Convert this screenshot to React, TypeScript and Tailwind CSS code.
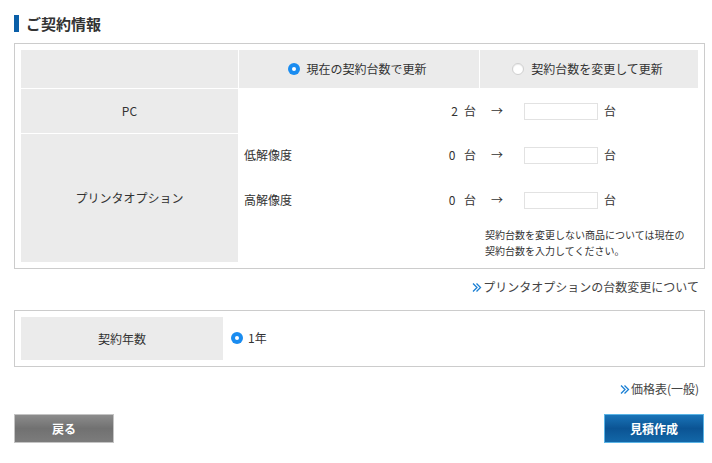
import React from "react"

const font = { fontFamily: '"Noto Sans CJK JP", "Noto Sans", sans-serif' }

function Radio({ checked }: { checked?: boolean }) {
  if (checked) {
    return (
      <span className="flex h-3 w-3 shrink-0 items-center justify-center rounded-full bg-[#1a8cf0]">
        <span className="h-[4px] w-[4px] rounded-full bg-white" />
      </span>
    )
  }
  return <span className="h-3 w-3 shrink-0 rounded-full border border-[#cfcfcf] bg-white shadow-[inset_0_1px_1px_rgba(0,0,0,0.08)]" />
}

function Chevrons() {
  return (
    <svg width="10" height="11" viewBox="0 0 10 11" className="mr-[1px] shrink-0">
      <path d="M1 1.5 L5 5.5 L1 9.5" fill="none" stroke="#1a7fd4" strokeWidth="1.3" />
      <path d="M4.5 1.5 L8.5 5.5 L4.5 9.5" fill="none" stroke="#1a7fd4" strokeWidth="1.3" />
    </svg>
  )
}

function NewCount() {
  return (
    <div className="flex items-center">
      <span className="ml-[11px] w-[33px]">→</span>
      <span className="h-[17px] w-[74px] border border-[#e2e2e2] bg-white" />
      <span className="ml-[6px]">台</span>
    </div>
  )
}

export default function App() {
  return (
    <div className="w-[712px] bg-white pl-[14px] pr-[7px] pt-[15px] pb-[20px] text-[12px] text-[#333]" style={font}>
      {/* TITLE */}
      <div className="flex h-[17px] items-center">
        <span className="h-[17px] w-[5px] bg-[#0a5fa8]" />
        <h2 className="ml-[7px] text-[15px] font-bold leading-[17px]">ご契約情報</h2>
      </div>

      {/* CONTRACT TABLE */}
      <div className="mt-[11px] border border-[#cccccc] p-[6px]">
        <div className="grid grid-cols-[217px_240px_218px] gap-px leading-[16px]">
          <div className="h-[38px] bg-[#ebebeb]" />
          <div className="flex items-center justify-center gap-[6px] bg-[#ebebeb] pr-[3px]">
            <Radio checked />
            <span>現在の契約台数で更新</span>
          </div>
          <div className="flex items-center justify-center gap-[7px] bg-[#ebebeb] pr-[3px]">
            <Radio />
            <span>契約台数を変更して更新</span>
          </div>

          <div className="flex h-[44px] items-center justify-center bg-[#ebebeb]">PC</div>
          <div className="flex items-center justify-end pr-[3px]">
            2 <span className="ml-[6px]">台</span>
          </div>
          <NewCount />

          <div className="flex h-[128px] items-center justify-center bg-[#ebebeb]">プリンタオプション</div>
          <div className="col-span-2 grid grid-cols-[240px_218px] grid-rows-[42px_48px_auto] gap-x-px">
            <div className="flex items-center justify-between pl-[5px] pr-[3px]">
              <span>低解像度</span>
              <span>0 <span className="ml-[6px]">台</span></span>
            </div>
            <NewCount />
            <div className="flex items-center justify-between pl-[5px] pr-[3px]">
              <span>高解像度</span>
              <span>0 <span className="ml-[6px]">台</span></span>
            </div>
            <NewCount />
            <div />
            <p className="pt-[3px] pl-[5px] text-[10px] leading-[16px]">
              契約台数を変更しない商品については現在の
              <br />
              契約台数を入力してください。
            </p>
          </div>
        </div>
      </div>

      <div className="mt-[9px] flex h-[18px] items-center justify-end pr-[6px] text-[#444]">
        <Chevrons />
        <span>プリンタオプションの台数変更について</span>
      </div>

      {/* CONTRACT YEARS */}
      <div className="mt-[14px] flex border border-[#cccccc] p-[6px]">
        <div className="flex h-[43px] w-[202px] items-center justify-center bg-[#ebebeb]">契約年数</div>
        <div className="flex items-center gap-[5px] pl-[8px] pb-[2px]">
          <Radio checked />
          <span>1年</span>
        </div>
      </div>

      <div className="mt-[13px] flex h-[18px] items-center justify-end pr-[6px] text-[#444]">
        <Chevrons />
        <span>価格表(一般)</span>
      </div>

      {/* BUTTONS */}
      <div className="mt-[16px] flex justify-between pr-[1px]">
        <button className="h-[29px] w-[100px] border border-[#c4c4c4] bg-gradient-to-b from-[#8c8c8c] via-[#717171] to-[#7c7c7c] text-[12px] font-bold text-white">
          戻る
        </button>
        <button className="h-[29px] w-[100px] border border-[#5ab4e6] bg-gradient-to-b from-[#1a74b8] via-[#0b5494] to-[#1367a8] text-[12px] font-bold text-white">
          見積作成
        </button>
      </div>
    </div>
  )
}
